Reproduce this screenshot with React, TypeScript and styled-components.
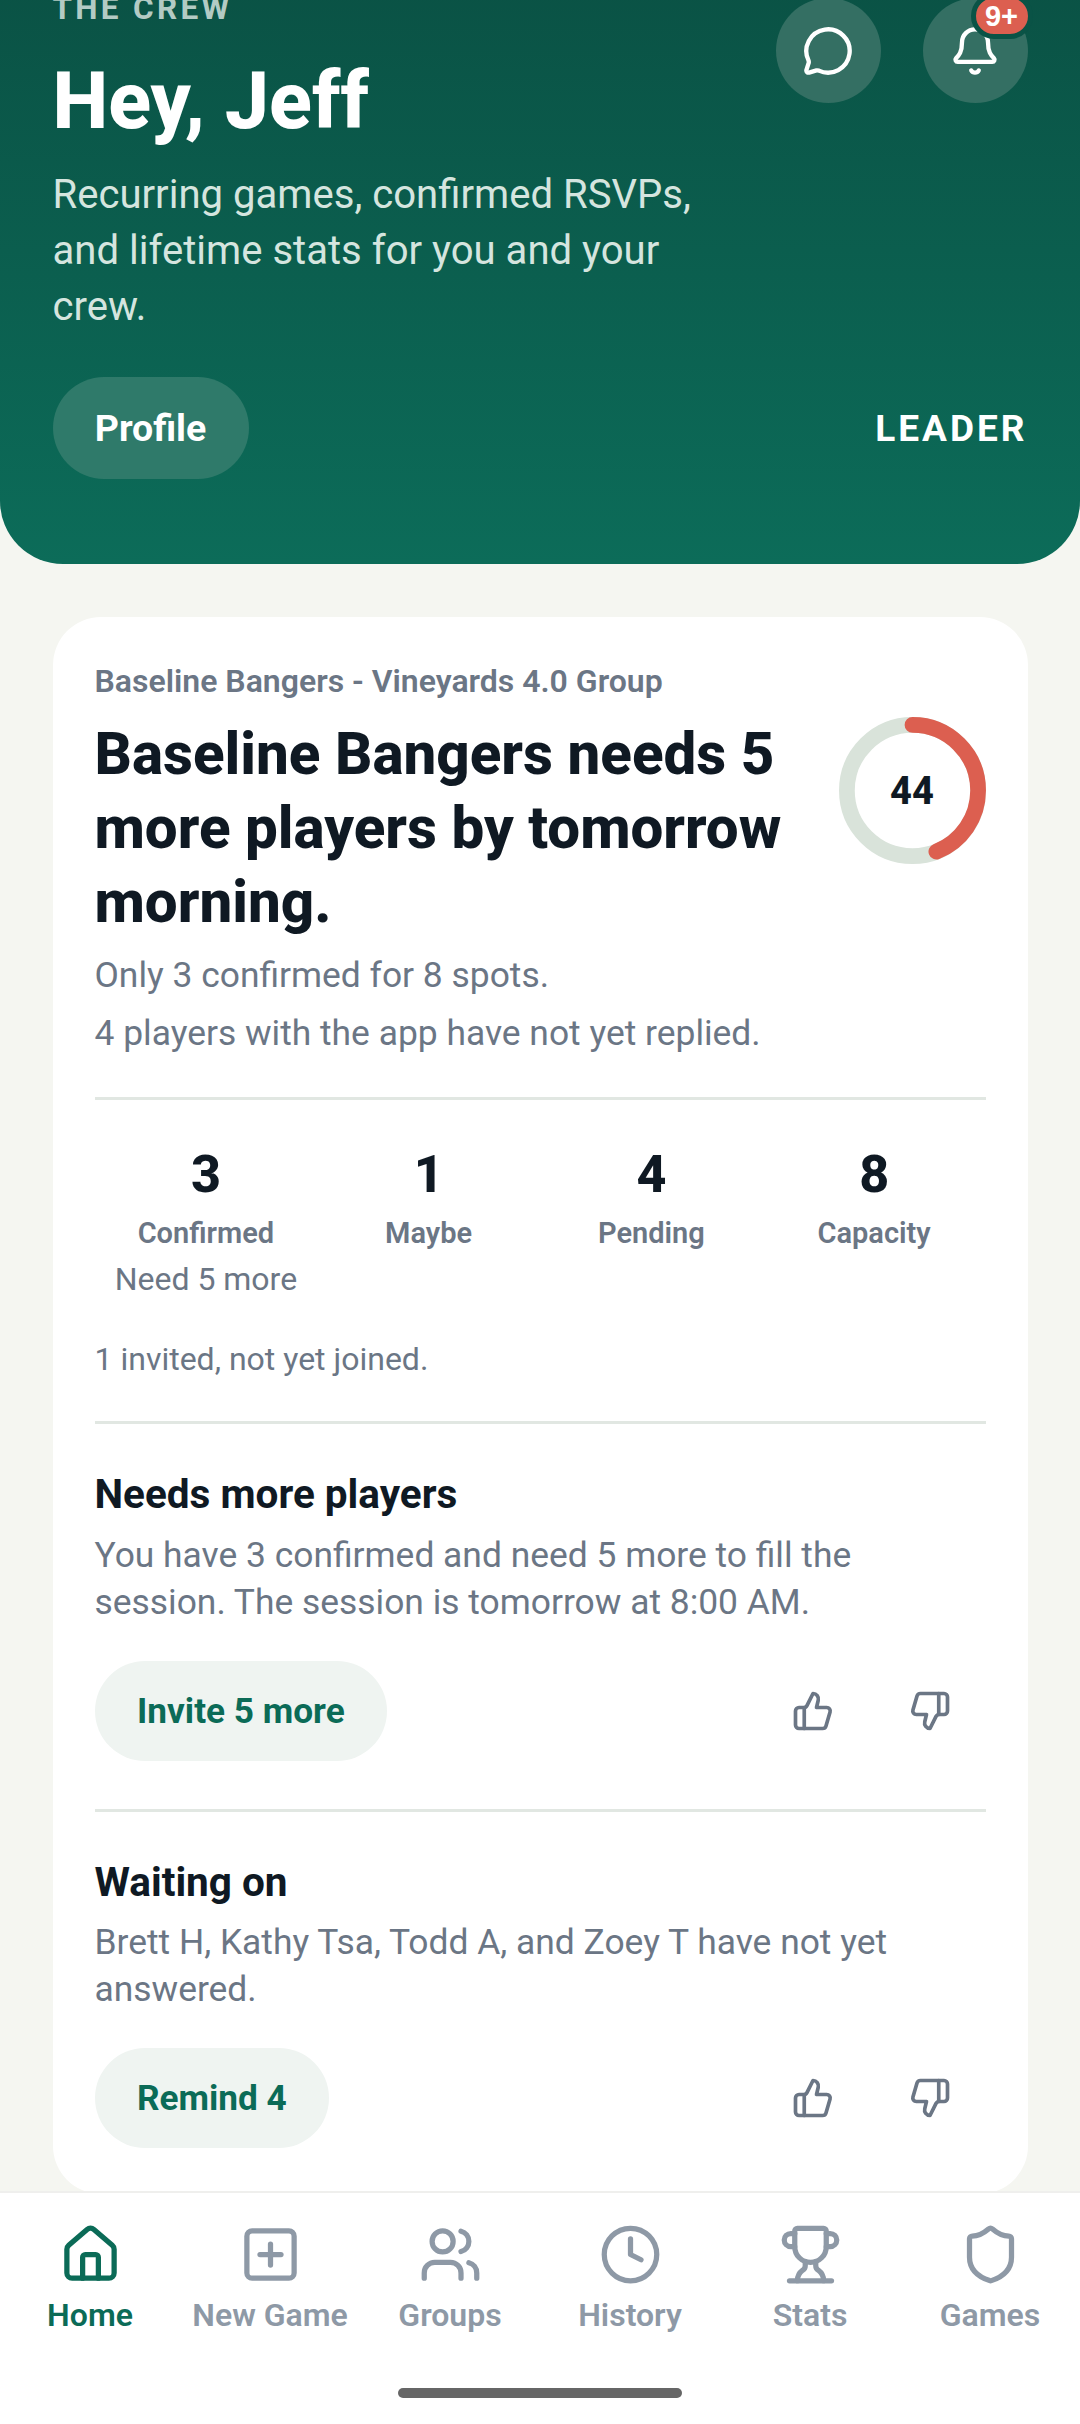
import React from "react";
import styled, { createGlobalStyle } from "styled-components";
import { Bell, Clock, House, MessageCircle, Shield, SquarePlus, ThumbsDown, ThumbsUp, Trophy, Users } from "lucide-react";

const Global = createGlobalStyle`
  html, body { margin: 0; padding: 0; background: #f5f6f1; }
  * { box-sizing: border-box; }
  body { font-family: Roboto, "Liberation Sans", sans-serif; }
`;

const Frame = styled.div`
  width: 1080px; height: 2424px; display: flex; flex-direction: column; overflow: hidden; background: #f5f6f1;
`;
const Scroll = styled.main`
  flex: 1; min-height: 0; overflow: hidden; display: flex; flex-direction: column;
`;
const Header = styled.header`
  flex: none; margin-top: -40px; height: 604px; padding: 34px 52.5px 0;
  background: linear-gradient(180deg, #0a5144 0%, #0c6c59 100%);
  border-radius: 0 0 63px 63px; display: flex; flex-direction: column;
`;
const HeaderTop = styled.div`
  display: flex; justify-content: space-between; align-items: flex-start;
`;
const HeaderCopy = styled.div`
  width: 660px; display: flex; flex-direction: column;
`;
const Eyebrow = styled.div`
  font-size: 31.5px; line-height: 30px; font-weight: 700; letter-spacing: 3.3px; color: #b3cbc4;
`;
const Title = styled.h1`
  margin: 33px 0 0; font-size: 79px; line-height: 88px; font-weight: 800; color: #fff;
`;
const Sub = styled.p`
  margin: 22px 0 0; font-size: 40.1px; line-height: 56px; font-weight: 400; color: #d5e5df;
`;
const IconRow = styled.div`
  display: flex; gap: 42px; margin-top: 4px;
`;
const RoundIcon = styled.button`
  position: relative; width: 105px; height: 105px; border-radius: 50%; border: none; padding: 0;
  background: #346f63; color: #fff; display: flex; align-items: center; justify-content: center;
`;
const Badge = styled.span`
  position: absolute; top: -5px; right: -5px; height: 46px; width: 62px;
  border-radius: 23px; background: #dc5f50; border: 5px solid #0a5346; color: #fff;
  font-size: 29px; line-height: 36px; font-weight: 700; text-align: center;
`;
const HeaderActions = styled.div`
  display: flex; justify-content: space-between; align-items: center; margin-top: 42px;
`;
const ProfileButton = styled.button`
  height: 102px; width: 196px; padding: 0; border-radius: 51px; border: none; background: #2f7a6a; color: #fff;
  font-family: inherit; font-size: 37.5px; font-weight: 700;
`;
const Role = styled.span`
  font-size: 37px; font-weight: 700; letter-spacing: 3px; color: #fff;
`;
const Card = styled.section`
  flex: none; margin: 53px 52.5px 0; padding: 42px; background: #fff; border-radius: 48px;
`;
const GroupLabel = styled.div`
  font-size: 32px; line-height: 44px; font-weight: 600; color: #6b7685;
`;
const Hero = styled.div`
  display: flex; justify-content: space-between; align-items: flex-start; gap: 30px; margin-top: 14px;
`;
const Headline = styled.h2`
  margin: 0; width: 705px; font-size: 58.3px; line-height: 74px; font-weight: 800; color: #0f1923;
`;
const Ring = styled.div`
  position: relative; flex: none; width: 147px; height: 147px;
`;
const RingValue = styled.span`
  position: absolute; inset: 0; display: flex; align-items: center; justify-content: center;
  font-size: 38px; font-weight: 800; color: #0f1923;
`;
const Meta = styled.p`
  margin: 0; font-size: 35.4px; line-height: 58px; color: #6b7685;
`;
const MetaBlock = styled.div`
  margin-top: 6.5px;
`;
const Divider = styled.hr<{ $gap?: number }>`
  border: none; height: 3px; margin: ${p => p.$gap ?? 0}px 0 0; background: #e1e7e2;
`;
const Stats = styled.div`
  display: grid; grid-template-columns: repeat(4, 1fr); margin-top: 45.5px;
`;
const Stat = styled.div`
  display: flex; flex-direction: column; align-items: center;
`;
const StatValue = styled.div`
  font-size: 52px; line-height: 60px; font-weight: 800; color: #0f1923;
`;
const StatLabel = styled.div`
  margin-top: 10px; font-size: 29px; line-height: 36px; font-weight: 600; color: #6b7685;
`;
const StatNote = styled.div`
  margin-top: 9px; font-size: 32px; line-height: 38px; color: #6b7685;
`;
const Invited = styled.div`
  margin: 42px 0 43px; font-size: 32px; line-height: 38px; color: #6b7685;
`;
const Insight = styled.div`
  padding: 45px 0 48px;
  &:last-child { padding-bottom: 4px; }
`;
const InsightTitle = styled.h3`
  margin: 0; font-size: 40.5px; line-height: 50px; font-weight: 700; color: #0f1923;
`;
const InsightBody = styled.p`
  margin: 12.5px 0 0; font-size: 35.4px; line-height: 47px; color: #6b7685;
`;
const InsightFoot = styled.div`
  display: flex; justify-content: space-between; align-items: center; margin-top: 35px;
`;
const ActionButton = styled.button`
  height: 100px; padding: 0 42.5px; border: none; border-radius: 50px; background: #eff4f1; color: #0b6b57;
  font-family: inherit; font-size: 35.2px; font-weight: 700;
`;
const Votes = styled.div`
  display: flex; gap: 75px; color: #6b7685; margin-right: 35px;
`;
const Nav = styled.nav`
  flex: none; height: 233px; background: #fff; border-top: 2px solid #efefed; position: relative;
  display: grid; grid-template-columns: repeat(6, 180px); align-content: start; padding-top: 30px;
`;
const NavItem = styled.div<{ $active?: boolean }>`
  display: flex; flex-direction: column; align-items: center; color: ${p => (p.$active ? "#0b6b57" : "#8e99a6")};
`;
const NavLabel = styled.span`
  margin-top: 10px; font-size: 32px; line-height: 38px; font-weight: 600;
`;
const HomeBar = styled.div`
  position: absolute; left: 398px; top: 195px; width: 284px; height: 10px; border-radius: 5px; background: #666;
`;

const navItems = [
  { label: "Home", Icon: House, active: true },
  { label: "New Game", Icon: SquarePlus },
  { label: "Groups", Icon: Users },
  { label: "History", Icon: Clock },
  { label: "Stats", Icon: Trophy },
  { label: "Games", Icon: Shield },
];

const stats = [
  { value: 3, label: "Confirmed", note: "Need 5 more" },
  { value: 1, label: "Maybe" },
  { value: 4, label: "Pending" },
  { value: 8, label: "Capacity" },
];

const insights = [
  {
    title: "Needs more players",
    body: "You have 3 confirmed and need 5 more to fill the session. The session is tomorrow at 8:00 AM.",
    action: "Invite 5 more",
  },
  {
    title: "Waiting on",
    body: "Brett H, Kathy Tsa, Todd A, and Zoey T have not yet answered.",
    action: "Remind 4",
  },
];

function ScoreRing({ value }: { value: number }) {
  const r = 65.6;
  const c = 2 * Math.PI * r;
  return (
    <Ring>
      <svg width="147" height="147" viewBox="0 0 147 147">
        <circle cx="73.5" cy="73.5" r={r} fill="none" stroke="#d9e3da" strokeWidth="15.75" />
        <circle
          cx="73.5" cy="73.5" r={r} fill="none" stroke="#dc5f50" strokeWidth="15.75" strokeLinecap="round"
          strokeDasharray={`${(c * value) / 100} ${c}`} transform="rotate(-90 73.5 73.5)"
        />
      </svg>
      <RingValue>{value}</RingValue>
    </Ring>
  );
}

export default function App() {
  return (
    <Frame>
      <Global />
      <Scroll>
        <Header>
          <HeaderTop>
            <HeaderCopy>
              <Eyebrow>THE CREW</Eyebrow>
              <Title>Hey, Jeff</Title>
              <Sub>Recurring games, confirmed RSVPs, and lifetime stats for you and your crew.</Sub>
            </HeaderCopy>
            <IconRow>
              <RoundIcon aria-label="Messages"><MessageCircle size={52} strokeWidth={2} /></RoundIcon>
              <RoundIcon aria-label="Notifications">
                <Bell size={52} strokeWidth={2} />
                <Badge>9+</Badge>
              </RoundIcon>
            </IconRow>
          </HeaderTop>
          <HeaderActions>
            <ProfileButton>Profile</ProfileButton>
            <Role>LEADER</Role>
          </HeaderActions>
        </Header>
        <Card>
          <GroupLabel>Baseline Bangers - Vineyards 4.0 Group</GroupLabel>
          <Hero>
            <Headline>Baseline Bangers needs 5 more players by tomorrow morning.</Headline>
            <ScoreRing value={44} />
          </Hero>
          <MetaBlock>
            <Meta>Only 3 confirmed for 8 spots.</Meta>
            <Meta>4 players with the app have not yet replied.</Meta>
          </MetaBlock>
          <Divider $gap={35} />
          <Stats>
            {stats.map(s => (
              <Stat key={s.label}>
                <StatValue>{s.value}</StatValue>
                <StatLabel>{s.label}</StatLabel>
                {s.note && <StatNote>{s.note}</StatNote>}
              </Stat>
            ))}
          </Stats>
          <Invited>1 invited, not yet joined.</Invited>
          <Divider />
          {insights.map((item, i) => (
            <React.Fragment key={item.title}>
              {i > 0 && <Divider />}
              <Insight>
                <InsightTitle>{item.title}</InsightTitle>
                <InsightBody>{item.body}</InsightBody>
                <InsightFoot>
                  <ActionButton>{item.action}</ActionButton>
                  <Votes>
                    <ThumbsUp size={42} strokeWidth={2.1} />
                    <ThumbsDown size={42} strokeWidth={2.1} />
                  </Votes>
                </InsightFoot>
              </Insight>
            </React.Fragment>
          ))}
        </Card>
      </Scroll>
      <Nav>
        {navItems.map(({ label, Icon, active }) => (
          <NavItem key={label} $active={active}>
            <Icon size={63} strokeWidth={2} />
            <NavLabel>{label}</NavLabel>
          </NavItem>
        ))}
        <HomeBar />
      </Nav>
    </Frame>
  );
}
